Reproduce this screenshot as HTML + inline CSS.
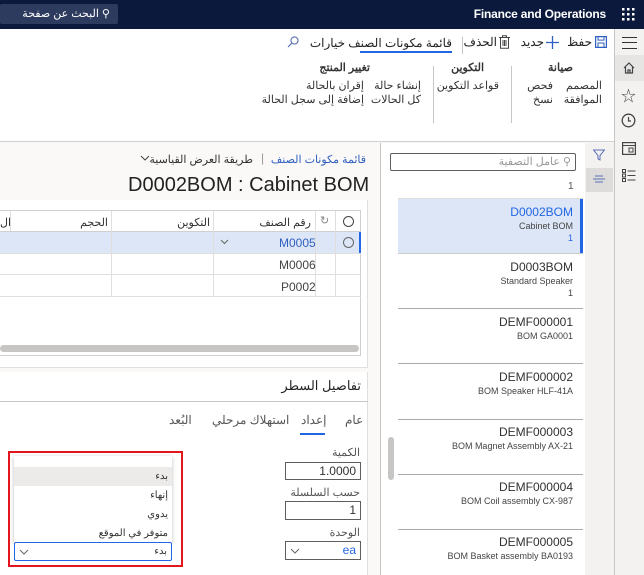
<html><head><style>
*{box-sizing:border-box;margin:0;padding:0}
body{width:644px;height:575px;overflow:hidden;position:relative;font-family:"Liberation Sans","Noto Sans CJK SC",sans-serif;background:#f8f7f6;color:#323130;font-size:11px}
.a{position:absolute;white-space:nowrap}
.r{text-align:right;direction:rtl}
</style></head><body>
<div class="a" style="left:0;top:0;width:644px;height:29px;background:#0b1a3c"></div>
<div class="a r" style="left:0;top:4px;width:118px;height:20px;background:#2c3b5e;border-radius:2px;color:#fff;font-size:11px;line-height:20px;padding-right:8px">⚲ البحث عن صفحة</div>
<div class="a" style="right:38px;top:7px;color:#fff;font-size:12px;font-weight:bold;letter-spacing:-0.2px">Finance and Operations</div>
<svg class="a" style="left:622px;top:8px" width="13" height="13"><g fill="#fff"><rect x="0" y="0" width="2.5" height="2.5"/><rect x="5" y="0" width="2.5" height="2.5"/><rect x="10" y="0" width="2.5" height="2.5"/><rect x="0" y="5" width="2.5" height="2.5"/><rect x="5" y="5" width="2.5" height="2.5"/><rect x="10" y="5" width="2.5" height="2.5"/><rect x="0" y="10" width="2.5" height="2.5"/><rect x="5" y="10" width="2.5" height="2.5"/><rect x="10" y="10" width="2.5" height="2.5"/></g></svg>
<!-- right nav -->
<div class="a" style="left:614px;top:29px;width:30px;height:546px;background:#f3f2f1;border-left:1px solid #c8c6c4"></div>
<div class="a" style="left:615px;top:55px;width:29px;height:26px;background:#e6e5e4"></div>
<div class="a" style="left:622px;top:37px;width:15px;height:12px;border-top:1.5px solid #333;border-bottom:1.5px solid #333"><div style="margin-top:3.5px;border-top:1.5px solid #333"></div></div>
<svg class="a" style="left:622px;top:61px" width="14" height="14"><path d="M2 7 L7 2 L12 7 M3.5 6 V12 H10.5 V6 M6 12 V9 H8 V12" fill="none" stroke="#444" stroke-width="1.2"/></svg>
<div class="a" style="left:621px;top:85px;font-size:15px;color:#444">☆</div>
<svg class="a" style="left:621px;top:113px" width="15" height="15"><circle cx="7.5" cy="7.5" r="6.3" fill="none" stroke="#444" stroke-width="1.3"/><path d="M7.5 4V8H10" fill="none" stroke="#444" stroke-width="1.2"/></svg>
<svg class="a" style="left:622px;top:142px" width="14" height="13"><rect x="0.6" y="0.6" width="12.8" height="11.8" fill="none" stroke="#444" stroke-width="1.2"/><path d="M0.6 3.5H13.4 M7 6h4v4h-4z" fill="none" stroke="#444"/></svg>
<svg class="a" style="left:622px;top:169px" width="14" height="13"><g fill="none" stroke="#444"><rect x="0.5" y="0.5" width="3" height="3"/><rect x="0.5" y="5" width="3" height="3"/><rect x="0.5" y="9.5" width="3" height="3"/><path d="M5.5 2H13.5M5.5 6.5H13.5M5.5 11H13.5"/></g></svg>
<!-- action pane -->
<div class="a" style="left:0;top:29px;width:614px;height:113px;background:#fff;border-bottom:1px solid #d2d0ce"></div>
<svg class="a" style="left:595px;top:36px" width="12" height="12"><rect x="0.6" y="0.6" width="10.8" height="10.8" fill="none" stroke="#2f5fbf" stroke-width="1.2"/><rect x="3" y="0.6" width="6" height="3.5" fill="none" stroke="#2f5fbf"/><rect x="3" y="7" width="6" height="4.4" fill="none" stroke="#2f5fbf"/></svg>
<div class="a r" style="right:52px;top:35px;font-size:12px;color:#222">حفظ</div>
<svg class="a" style="left:545px;top:35px" width="15" height="15"><path d="M7.5 1V14M1 7.5H14" stroke="#2f5fbf" stroke-width="1.3"/></svg>
<div class="a r" style="right:100px;top:35px;font-size:12px;color:#222">جديد</div>
<div class="a" style="left:462px;top:37px;width:1px;height:17px;background:#c8c6c4"></div>
<svg class="a" style="left:499px;top:35px" width="11" height="14"><path d="M0 2.5H11M3.5 2.5V0.8H7.5V2.5M1.5 2.5V13.3H9.5V2.5M4 5V11M5.5 5V11M7 5V11" fill="none" stroke="#444" stroke-width="1"/></svg>
<div class="a r" style="right:147px;top:35px;font-size:12px;color:#222">الحذف</div>
<div class="a r" style="right:192px;top:36px;font-size:12px;color:#222">قائمة مكونات الصنف</div>
<div class="a" style="left:360px;top:51px;width:92px;height:2px;background:#2266e3"></div>
<div class="a r" style="right:299px;top:36px;font-size:12px;color:#222">خيارات</div>
<svg class="a" style="left:287px;top:36px" width="12" height="12"><circle cx="7.5" cy="4.5" r="3.6" fill="none" stroke="#5a6fb5" stroke-width="1.1"/><path d="M5 7L1 11" stroke="#5a6fb5" stroke-width="1.2"/></svg>
<div class="a r" style="right:71px;top:61px;font-size:11px;font-weight:bold;color:#333">صيانة</div>
<div class="a r" style="right:42px;top:79px;line-height:14px;color:#333">المصمم<br>الموافقة</div>
<div class="a r" style="right:91px;top:79px;line-height:14px;color:#333">فحص<br>نسخ</div>
<div class="a" style="left:511px;top:66px;width:1px;height:57px;background:#c8c6c4"></div>
<div class="a" style="left:433px;top:66px;width:1px;height:57px;background:#c8c6c4"></div>
<div class="a r" style="right:160px;top:61px;font-weight:bold;color:#333">التكوين</div>
<div class="a r" style="right:145px;top:79px;color:#333">قواعد التكوين</div>
<div class="a r" style="right:274px;top:61px;font-weight:bold;color:#333">تغيير المنتج</div>
<div class="a r" style="right:223px;top:79px;line-height:14px;color:#333">إنشاء حالة<br>كل الحالات</div>
<div class="a r" style="right:280px;top:79px;line-height:14px;color:#333">إقران بالحالة<br>إضافة إلى سجل الحالة</div>
<!-- left -->
<div class="a" style="left:0;top:143px;width:380px;height:432px;background:#faf9f8"></div>
<div class="a" style="left:380px;top:143px;width:1px;height:432px;background:#c8c6c4"></div>
<div class="a r" style="right:278px;top:153px;font-size:11px;color:#2f5fbf">قائمة مكونات الصنف</div>
<div class="a" style="left:261px;top:151px;font-size:12px;color:#999">|</div>
<div class="a r" style="right:391px;top:153px;font-size:11px;color:#333">طريقة العرض القياسية</div>
<svg class="a" style="left:140px;top:155px" width="10" height="7"><path d="M1 1L5 5L9 1" fill="none" stroke="#444"/></svg>
<div class="a" style="left:128px;top:174px;font-size:20px;color:#222">D0002BOM : Cabinet BOM</div>
<!-- list panel -->
<div class="a" style="left:381px;top:143px;width:204px;height:432px;background:#fff"></div>
<div class="a" style="left:585px;top:143px;width:29px;height:432px;background:#f3f2f1"></div>
<div class="a" style="left:586px;top:168px;width:27px;height:24px;background:#dedcda"></div>
<svg class="a" style="left:593px;top:149px" width="12" height="12"><path d="M0.5 1H11.5L7 6.5V11L5 10V6.5Z" fill="none" stroke="#5a6fb5"/></svg>
<svg class="a" style="left:593px;top:175px" width="12" height="8"><path d="M2 1H10M0 4H12M2 7H10" stroke="#5a6fb5"/></svg>
<div class="a r" style="left:390px;top:153px;width:186px;height:18px;border:1px solid #605e5c;border-radius:2px;font-size:11px;line-height:16px;color:#999;padding-right:4px">⚲ عامل التصفية</div>
<div class="a" style="left:568px;top:181px;color:#555;font-size:10px">1</div>
<div class="a" style="left:398px;top:198px;width:185px;height:1px;background:#ddd"></div>
<div class="a" style="left:398px;top:199px;width:185px;height:54px;background:#dce6f7"></div>
<div class="a" style="left:580px;top:199px;width:3px;height:54px;background:#2266e3"></div>
<div class="a" style="left:388px;top:437px;width:6px;height:43px;background:#c8c6c4;border-radius:3px"></div>
<div class="a r" style="left:398px;top:205px;width:175px;line-height:12px">
<div style="font-size:12px;color:#2266e3;line-height:15px">D0002BOM</div><div style="font-size:9px;color:#444">Cabinet BOM</div><div style="font-size:9px;color:#2266e3">1</div></div>
<div class="a r" style="left:398px;top:260px;width:175px;line-height:12px">
<div style="font-size:12px;line-height:15px">D0003BOM</div><div style="font-size:9px;color:#444">Standard Speaker</div><div style="font-size:9px;color:#444">1</div></div>
<div class="a" style="left:398px;top:253px;width:185px;height:1px;background:#ccc"></div>
<div class="a" style="left:398px;top:308px;width:185px;height:1px;background:#aaa"></div>
<div class="a" style="left:398px;top:363px;width:185px;height:1px;background:#aaa"></div>
<div class="a" style="left:398px;top:419px;width:185px;height:1px;background:#aaa"></div>
<div class="a" style="left:398px;top:474px;width:185px;height:1px;background:#aaa"></div>
<div class="a" style="left:398px;top:529px;width:185px;height:1px;background:#aaa"></div>
<div class="a" style="left:398px;top:315px;width:175px;text-align:right;line-height:12px"><div style="font-size:12px;line-height:15px">DEMF000001</div><div style="font-size:9px;color:#444">BOM GA0001</div></div>
<div class="a" style="left:398px;top:370px;width:175px;text-align:right;line-height:12px"><div style="font-size:12px;line-height:15px">DEMF000002</div><div style="font-size:9px;color:#444">BOM Speaker HLF-41A</div></div>
<div class="a" style="left:398px;top:425px;width:175px;text-align:right;line-height:12px"><div style="font-size:12px;line-height:15px">DEMF000003</div><div style="font-size:9px;color:#444">BOM Magnet Assembly AX-21</div></div>
<div class="a" style="left:398px;top:480px;width:175px;text-align:right;line-height:12px"><div style="font-size:12px;line-height:15px">DEMF000004</div><div style="font-size:9px;color:#444">BOM Coil assembly CX-987</div></div>
<div class="a" style="left:398px;top:535px;width:175px;text-align:right;line-height:12px"><div style="font-size:12px;line-height:15px">DEMF000005</div><div style="font-size:9px;color:#444">BOM Basket assembly BA0193</div></div>
<!-- grid card -->
<div class="a" style="left:0;top:200px;width:368px;height:168px;background:#fff;border-right:1px solid #e1dfdd;border-bottom:1px solid #e1dfdd"></div>
<div class="a" style="left:0;top:210px;width:361px;height:146px;border:1px solid #d2d0ce;border-left:none"></div>
<div class="a" style="left:0;top:231px;width:361px;height:1px;background:#d2d0ce"></div>
<div class="a" style="left:0;top:232px;width:361px;height:21px;background:#dce6f7"></div>
<div class="a" style="left:359px;top:232px;width:2px;height:21px;background:#2266e3"></div>
<div class="a" style="left:0;top:253px;width:361px;height:1px;background:#e1dfdd"></div>
<div class="a" style="left:0;top:274px;width:361px;height:1px;background:#e1dfdd"></div>
<div class="a" style="left:0;top:296px;width:361px;height:1px;background:#e1dfdd"></div>
<div class="a" style="left:335px;top:211px;width:1px;height:86px;background:#e1dfdd"></div>
<div class="a" style="left:315px;top:211px;width:1px;height:86px;background:#e1dfdd"></div>
<div class="a" style="left:213px;top:211px;width:1px;height:86px;background:#e1dfdd"></div>
<div class="a" style="left:111px;top:211px;width:1px;height:86px;background:#e1dfdd"></div>
<div class="a" style="left:10px;top:211px;width:1px;height:20px;background:#e1dfdd"></div>
<div class="a" style="left:343px;top:216px;width:11px;height:11px;border:1px solid #444;border-radius:50%"></div>
<div class="a" style="left:343px;top:237px;width:11px;height:11px;border:1px solid #666;border-radius:50%"></div>
<div class="a" style="left:320px;top:214px;font-size:11px;color:#888">↻</div>
<div class="a r" style="right:333px;top:216px">رقم الصنف</div>
<div class="a r" style="right:434px;top:216px">التكوين</div>
<div class="a r" style="right:536px;top:216px">الحجم</div>
<div class="a" style="left:0;top:216px">ال</div>
<svg class="a" style="left:220px;top:239px" width="9" height="6"><path d="M1 1L4.5 4.5L8 1" fill="none" stroke="#666"/></svg>
<div class="a" style="left:279px;top:236px;font-size:12px;color:#2f5fbf">M0005</div>
<div class="a" style="left:279px;top:258px;font-size:12px;color:#444">M0006</div>
<div class="a" style="left:281px;top:280px;font-size:12px;color:#444">P0002</div>
<div class="a" style="left:0;top:345px;width:359px;height:7px;background:#c8c6c4;border-radius:4px"></div>
<!-- details card -->
<div class="a" style="left:0;top:372px;width:368px;height:203px;background:#fff;border-right:1px solid #e1dfdd"></div>
<div class="a" style="left:0;top:401px;width:368px;height:1px;background:#c8c6c4"></div>
<div class="a r" style="right:283px;top:378px;font-size:13px;color:#222">تفاصيل السطر</div>
<div class="a" style="left:345px;top:413px;font-size:12px;color:#555">عام</div>
<div class="a" style="left:301px;top:413px;font-size:12px;color:#555">إعداد</div>
<div class="a" style="left:300px;top:433px;width:25px;height:2px;background:#2266e3"></div>
<div class="a" style="left:212px;top:413px;font-size:12px;color:#555">استهلاك مرحلي</div>
<div class="a" style="left:169px;top:413px;font-size:12px;color:#555">البُعد</div>
<div class="a r" style="right:284px;top:446px;color:#555">الكمية</div>
<div class="a" style="left:285px;top:462px;width:76px;height:18px;border:1px solid #605e5c;text-align:right;padding-right:4px;font-size:12px;line-height:16px">1.0000</div>
<div class="a r" style="right:284px;top:486px;color:#555">حسب السلسلة</div>
<div class="a" style="left:285px;top:501px;width:76px;height:19px;border:1px solid #605e5c;text-align:right;padding-right:4px;font-size:12px;line-height:17px">1</div>
<div class="a r" style="right:284px;top:526px;color:#555">الوحدة</div>
<div class="a" style="left:285px;top:541px;width:76px;height:19px;border:1px solid #605e5c;text-align:right;padding-right:4px;font-size:12px;line-height:17px;color:#2266e3">ea<svg class="a" style="left:4px;top:6px" width="10" height="6"><path d="M1 1L5 5L9 1" fill="none" stroke="#666"/></svg></div>
<!-- dropdown -->
<div class="a" style="left:8px;top:451px;width:175px;height:116px;border:2px solid #e3161d"></div>
<div class="a" style="left:14px;top:456px;width:158px;height:87px;background:#fff;box-shadow:0 1px 4px rgba(0,0,0,.25)"></div>
<div class="a" style="left:14px;top:467px;width:158px;height:19px;background:#edebe9"></div>
<div class="a r" style="right:476px;top:471px;font-size:10px">بدء</div>
<div class="a r" style="right:476px;top:490px;font-size:10px">إنهاء</div>
<div class="a r" style="right:476px;top:509px;font-size:10px">يدوي</div>
<div class="a r" style="right:476px;top:528px;font-size:10px">متوفر في الموقع</div>
<div class="a" style="left:14px;top:542px;width:158px;height:19px;border:1px solid #2266e3;background:#fff;border-radius:2px;text-align:right;padding-right:4px;font-size:10px;line-height:17px">بدء<svg class="a" style="left:4px;top:6px" width="10" height="6"><path d="M1 1L5 5L9 1" fill="none" stroke="#666"/></svg></div>
</body></html>
